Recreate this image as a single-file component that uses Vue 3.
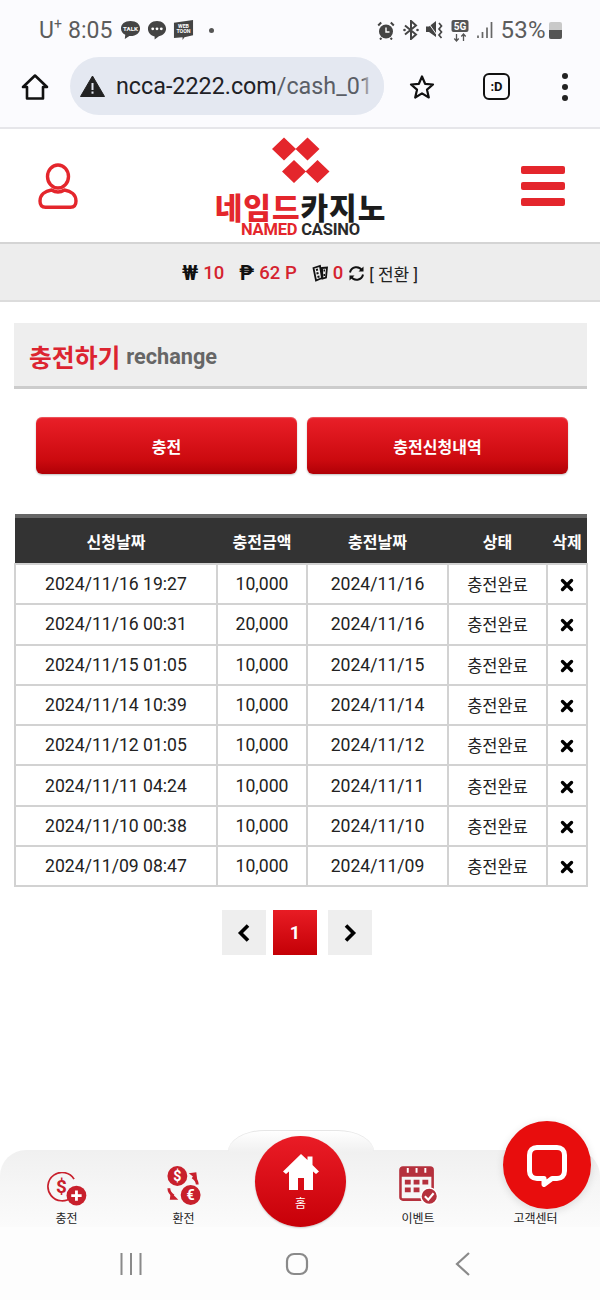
<template>
  <div class="page">
    <!-- 상태바 -->
    <div class="status">
      <div class="status-left">
        <span class="carrier">U<sup>+</sup></span>
        <span class="clock">8:05</span>
        <svg class="ic" width="21" height="20" viewBox="0 0 22 21">
          <path d="M11 1C5 1 1 4.300 1 8.800c0 3 1.800 5.200 4.500 6.600L5 20l4.800-3.300c.4.100.8.100 1.200.100 6 0 10-3.500 10-8S17 1 11 1z" fill="#444" />
          <text x="11" y="11.500" text-anchor="middle" class="tiny">TALK</text>
        </svg>
        <svg class="ic" width="20" height="20" viewBox="0 0 20 21">
          <path d="M10 1C4.500 1 .5 4.500 .5 9.300c0 4.200 3 7.300 7 7.900V20.500l4.500-3.400c4.500-.8 7.500-3.900 7.500-7.800C19.500 4.500 15.500 1 10 1z" fill="#444" />
          <circle cx="5.500" cy="9.300" r="1.500" fill="#fff" /><circle cx="10" cy="9.300" r="1.500" fill="#fff" /><circle cx="14.500" cy="9.300" r="1.500" fill="#fff" />
        </svg>
        <svg class="ic" width="21" height="22" viewBox="0 0 22 23">
          <path d="M1 4l20-3v16l-9 2-2 3v-3l-9 1z" fill="#444" />
          <text x="11" y="9" text-anchor="middle" class="tiny2">WEB</text>
          <text x="11" y="15" text-anchor="middle" class="tiny2">TOON</text>
        </svg>
        <span class="dot"></span>
      </div>
      <div class="status-right">
        <svg width="18" height="19" viewBox="0 0 18 19">
          <circle cx="9" cy="10.500" r="7" fill="#444" />
          <path d="M9 6.500v4.500h3.500" stroke="#fff" stroke-width="1.400" fill="none" />
          <path d="M1.200 4.500l3-3M16.800 4.500l-3-3M4.500 17l-1.500 1.500M13.500 17l1.500 1.500" stroke="#444" stroke-width="2" />
        </svg>
        <svg width="18" height="20" viewBox="0 0 18 20">
          <path d="M3 5.500l11 9-5 4.500V1l5 4.500-11 9" stroke="#444" stroke-width="2" fill="none" />
          <circle cx="2.500" cy="10" r="1.300" fill="#444" /><circle cx="15.500" cy="10" r="1.300" fill="#444" />
        </svg>
        <svg width="18" height="20" viewBox="0 0 18 20">
          <path d="M0 6.500h3l7-5.500v16L3 12H0z" fill="#444" />
          <path d="M1 1l12 17" stroke="#fbfbfe" stroke-width="1" />
          <path d="M13 3l2.500 3-2.500 3 2.500 3-2.500 3 2.500 3" stroke="#444" stroke-width="1.700" fill="none" />
        </svg>
        <svg width="18" height="23" viewBox="0 0 18 23">
          <rect x=".5" y="1" width="17" height="12" rx="2" fill="#555" />
          <text x="9" y="11" text-anchor="middle" class="five">5G</text>
          <path d="M5.500 15v7M3.300 19.500L5.500 22l2.200-2.500M12.500 22v-7M10.300 17.500L12.500 15l2.200 2.500" stroke="#555" stroke-width="1.300" fill="none" />
        </svg>
        <svg width="18" height="18" viewBox="0 0 18 18">
          <path d="M2 14.500v2.500M6.500 11v6M11 6.500V17M15.500 1v16" stroke="#666" stroke-width="1.700" />
        </svg>
        <span class="battery-text">53%</span>
        <span class="battery"><i></i></span>
      </div>
    </div>

    <!-- 브라우저 주소창 -->
    <div class="browser">
      <svg width="28" height="28" viewBox="0 0 28 28" class="b-home">
        <path d="M14 2.500L2 14h4v11.500h16V14h4z" fill="none" stroke="#111" stroke-width="2.600" stroke-linejoin="round" />
      </svg>
      <div class="url">
        <svg width="25" height="22" viewBox="0 0 25 22">
          <path d="M12.500 1L24.500 21.500H.5z" fill="#222" stroke="#222" stroke-linejoin="round" />
          <rect x="11.500" y="8" width="2" height="7" fill="#e4e8f1" />
          <rect x="11.500" y="16.500" width="2" height="2.200" fill="#e4e8f1" />
        </svg>
        <span class="url-text"><b>ncca-2222.com</b>/cash_01</span>
        <span class="url-fade"></span>
      </div>
      <svg width="26" height="26" viewBox="0 0 26 26" class="b-star">
        <path d="M13 2.500l3.100 7.300 7.900.7-6 5.200 1.800 7.800L13 19.400l-6.800 4.100L8 15.700l-6-5.200 7.900-.7z" fill="none" stroke="#111" stroke-width="2.200" stroke-linejoin="round" />
      </svg>
      <div class="tab-btn">:D</div>
      <div class="more"><i></i><i></i><i></i></div>
    </div>

    <!-- 헤더 -->
    <header class="head">
      <svg width="40" height="46" viewBox="0 0 40 46">
        <ellipse cx="20" cy="13.500" rx="10.500" ry="11.500" fill="none" stroke="#e4262c" stroke-width="3.400" />
        <path d="M13.500 27C7 28 2 32 2 38c0 4 2 6.200 5.500 6.200h25C36 44.200 38 42 38 38c0-6-5-10-11.500-11-4 2.500-9 2.500-13 0z" fill="none" stroke="#e4262c" stroke-width="3.400" stroke-linejoin="round" />
      </svg>
      <div class="logo">
        <svg width="58" height="47" viewBox="0 0 58 47">
          <path d="M12 .5L24 12 12 23.500 0 12zM35.500 .5L47.500 12 35.500 23.500 23.500 12zM22 23L34 34.500 22 46 10 34.500zM45.500 23L57.500 34.500 45.500 46 33.500 34.500z" fill="#e4262c" />
        </svg>
        <div class="logo-ko"><span class="red">네임드</span><span>카지노</span></div>
        <div class="logo-en"><span class="red">NAMED</span> CASINO</div>
      </div>
      <div class="burger"><i></i><i></i><i></i></div>
    </header>

    <!-- 보유금 -->
    <div class="balance">
      <b class="sym">₩</b><span class="val">10</span>
      <b class="sym gap">₱</b><span class="val">62 P</span>
      <svg class="dice" width="16" height="18" viewBox="0 0 16 18">
        <path d="M1.500 4L8 2l2 12-6 2.500zM10 4l5-.5-1 10-3.500 1z" fill="none" stroke="#111" stroke-width="1.800" />
        <path d="M4 6l2-.5M4.500 9.500l2-.5M5.500 13l2-.5M11.500 6.500h1.500M11.500 11h1.500" stroke="#111" stroke-width="2" />
      </svg>
      <span class="val chip">0</span>
      <svg class="refresh" width="17" height="17" viewBox="0 0 17 17">
        <path d="M2 7.500A6.500 6.500 0 0 1 14 5.500M15 9.500A6.500 6.500 0 0 1 3 11.500" fill="none" stroke="#111" stroke-width="2" />
        <path d="M15.500 1.500v5h-5zM1.500 15.500v-5h5z" fill="#111" />
      </svg>
      <span class="swap">[ 전환 ]</span>
    </div>

    <main class="content">
      <div class="title"><strong>충전하기</strong><span>rechange</span></div>

      <div class="btns">
        <button>충전</button>
        <button>충전신청내역</button>
      </div>

      <table class="list">
        <colgroup>
          <col style="width:202px" /><col style="width:90px" /><col style="width:141px" /><col style="width:99px" /><col style="width:40px" />
        </colgroup>
        <thead>
          <tr><th>신청날짜</th><th>충전금액</th><th>충전날짜</th><th>상태</th><th>삭제</th></tr>
        </thead>
        <tbody>
          <tr v-for="row in rows" :key="row[0]">
            <td>{{ row[0] }}</td>
            <td>{{ row[1] }}</td>
            <td>{{ row[2] }}</td>
            <td class="state">충전완료</td>
            <td>
              <svg width="14" height="14" viewBox="0 0 14 14"><path d="M2.500 2.500l9 9M11.500 2.500l-9 9" stroke="#000" stroke-width="3.400" stroke-linecap="round" /></svg>
            </td>
          </tr>
        </tbody>
      </table>

      <div class="pager">
        <span class="pg">
          <svg width="14" height="20" viewBox="0 0 14 20"><path d="M11 2.500L3.500 10l7.500 7.500" fill="none" stroke="#000" stroke-width="3.600" /></svg>
        </span>
        <span class="pg on">1</span>
        <span class="pg next">
          <svg width="14" height="20" viewBox="0 0 14 20"><path d="M3 2.500L10.500 10 3 17.500" fill="none" stroke="#000" stroke-width="3.600" /></svg>
        </span>
      </div>
    </main>

    <!-- 하단 메뉴 -->
    <nav class="bottom">
      <div class="hump"></div>
      <div class="item">
        <svg width="40" height="34" viewBox="0 0 42 36">
          <path d="M26 26.500A15 15 0 1 1 28.500 7.500" fill="none" stroke="#c8202c" stroke-width="1.800" />
          <text x="15" y="22" text-anchor="middle" class="money">$</text>
          <circle cx="31" cy="25" r="10.500" fill="#c8202c" />
          <path d="M25.500 25h11M31 19.500v11" stroke="#fff" stroke-width="3" />
        </svg>
        <span>충전</span>
      </div>
      <div class="item">
        <svg width="36" height="41" viewBox="0 0 38 42">
          <circle cx="12" cy="11" r="10.500" fill="#c8202c" />
          <text x="12" y="16" text-anchor="middle" class="coin">$</text>
          <circle cx="26" cy="31" r="10.500" fill="#c8202c" />
          <text x="26" y="36" text-anchor="middle" class="coin">€</text>
          <path d="M33 20c0-4-2-6-5-8" fill="none" stroke="#c8202c" stroke-width="3" />
          <path d="M24 8l8-1 1 8z" fill="#c8202c" />
          <path d="M3 24c0 4 2 6 5 8" fill="none" stroke="#c8202c" stroke-width="3" />
          <path d="M13 36l-9 0 1-8z" fill="#c8202c" />
        </svg>
        <span>환전</span>
      </div>
      <div class="item"></div>
      <div class="item">
        <svg width="39" height="41" viewBox="0 0 40 42">
          <rect x="1.500" y="2.500" width="33" height="33" rx="2.500" fill="#f6f6f6" stroke="#b5313d" stroke-width="2.600" />
          <path d="M1.500 5a2.500 2.500 0 0 1 2.500-2.500h28A2.500 2.500 0 0 1 34.500 5v7h-33z" fill="#b5313d" />
          <path d="M9 3v5M18 3v5M27 3v5" stroke="#fff" stroke-width="2" />
          <path d="M6 15h6v5H6zM15 15h6v5h-6zM24 15h6v5h-6zM6 23h6v5H6zM15 23h6v5h-6z" fill="#b5313d" />
          <circle cx="31" cy="32" r="8.500" fill="#b5313d" stroke="#fff" stroke-width="1.500" />
          <path d="M26.500 32l3.500 3.500 5.500-6.500" fill="none" stroke="#fff" stroke-width="2.200" />
        </svg>
        <span>이벤트</span>
      </div>
      <div class="item last"><span>고객센터</span></div>

      <div class="fab-home">
        <svg width="36" height="37" viewBox="0 0 36 37">
          <path d="M18 1L0 18.500l3 2.500 3-2.500V37h9V25h6v12h9V18.500l3 2.500 3-2.500-6.500-6.500V3.500h-5v3.500z" fill="#fff" />
        </svg>
        <span>홈</span>
      </div>
      <div class="fab-chat">
        <svg width="40" height="42" viewBox="0 0 40 42">
          <path d="M10 2.500h20c4.500 0 7.500 3 7.500 7.500v16c0 4.500-3 7.500-7.500 7.500h-5l-8 6v-6h-7c-4.500 0-7.500-3-7.500-7.500V10c0-4.500 3-7.500 7.500-7.500z" fill="none" stroke="#fff" stroke-width="5" stroke-linejoin="round" />
        </svg>
      </div>
    </nav>

    <!-- 안드로이드 내비 -->
    <div class="android">
      <svg width="24" height="24" viewBox="0 0 24 24"><path d="M2.500 1v22M12 1v22M21.500 1v22" stroke="#8a8a8a" stroke-width="2" /></svg>
      <svg width="24" height="24" viewBox="0 0 24 24"><rect x="2" y="2" width="20" height="20" rx="7" fill="none" stroke="#8a8a8a" stroke-width="2.200" /></svg>
      <svg width="24" height="26" viewBox="0 0 24 26"><path d="M18 2L6 13l12 11" fill="none" stroke="#8a8a8a" stroke-width="2.200" /></svg>
    </div>
  </div>
</template>

<script setup>
const rows = [
  ['2024/11/16 19:27', '10,000', '2024/11/16'],
  ['2024/11/16 00:31', '20,000', '2024/11/16'],
  ['2024/11/15 01:05', '10,000', '2024/11/15'],
  ['2024/11/14 10:39', '10,000', '2024/11/14'],
  ['2024/11/12 01:05', '10,000', '2024/11/12'],
  ['2024/11/11 04:24', '10,000', '2024/11/11'],
  ['2024/11/10 00:38', '10,000', '2024/11/10'],
  ['2024/11/09 08:47', '10,000', '2024/11/09'],
]
</script>

<style>
html,
body {
  margin: 0;
  background: #fff;
}
</style>

<style scoped>
.page {
  width: 600px;
  height: 1300px;
  display: flex;
  flex-direction: column;
  overflow: hidden;
  background: #fff;
  font-family: Roboto, "Noto Sans CJK KR", sans-serif;
  color: #222;
}

.status {
  height: 46px;
  flex: none;
  padding: 14px 38px 0 39px;
  box-sizing: border-box;
  display: flex;
  justify-content: space-between;
  align-items: center;
  background: #fbfbfe;
  color: #5c5c5c;
  font-size: 23px;
}
.status-left {
  display: flex;
  align-items: center;
  gap: 6px;
}
.carrier {
  width: 23px;
  white-space: nowrap;
}
.carrier sup {
  font-size: 14px;
  line-height: 0;
}
.clock {
  margin: 0 2px 0 0;
}
.tiny {
  font: 700 6.500px Roboto, sans-serif;
  fill: #fff;
}
.tiny2 {
  font: 700 5.500px Roboto, sans-serif;
  fill: #fff;
}
.five {
  font: 700 10px Roboto, sans-serif;
  fill: #fff;
}
.dot {
  width: 5px;
  height: 5px;
  border-radius: 50%;
  background: #555;
  margin-left: 9px;
}
.status-right {
  display: flex;
  align-items: center;
  gap: 6.700px;
}
.battery-text {
  font-size: 24px;
  letter-spacing: 0.300px;
}
.battery {
  width: 13px;
  height: 17px;
  margin-left: -3.700px;
  border-radius: 2px;
  background: #c9c9c9;
  display: flex;
  align-items: flex-end;
  overflow: hidden;
}
.battery i {
  display: block;
  width: 100%;
  height: 9px;
  background: #555;
}

.browser {
  height: 81px;
  flex: none;
  display: flex;
  align-items: center;
  background: #fbfbfe;
  border-bottom: 2px solid #e6e6ea;
}
.b-home {
  margin-left: 21px;
}
.url {
  position: relative;
  width: 314px;
  height: 58px;
  margin: -1px 0 0 21px;
  padding-left: 10px;
  box-sizing: border-box;
  border-radius: 29px;
  background: #e4e8f1;
  display: flex;
  align-items: center;
  gap: 11px;
  overflow: hidden;
}
.url-text {
  font-size: 23.300px;
  color: #5a5e66;
  white-space: nowrap;
}
.url-text b {
  font-weight: 400;
  color: #1e2126;
}
.url-fade {
  position: absolute;
  right: 0;
  top: 0;
  width: 22px;
  height: 100%;
  background: linear-gradient(90deg, rgba(228, 232, 241, 0), #e4e8f1 50%);
}
.b-star {
  margin-left: 25px;
}
.tab-btn {
  width: 27px;
  height: 27px;
  margin-left: 48px;
  box-sizing: border-box;
  border: 2.500px solid #111;
  border-radius: 6px;
  display: flex;
  align-items: center;
  justify-content: center;
  font-size: 13px;
  font-weight: 700;
  color: #111;
}
.more {
  margin-left: 52px;
  display: flex;
  flex-direction: column;
  gap: 5px;
}
.more i {
  width: 6px;
  height: 6px;
  border-radius: 50%;
  background: #222;
}

.head {
  height: 115px;
  flex: none;
  padding: 0 35px 0 38px;
  box-sizing: border-box;
  display: flex;
  align-items: center;
  justify-content: space-between;
  border-bottom: 2px solid #d4d4d4;
}
.logo {
  height: 113px;
  margin-left: 2px;
  padding-top: 8px;
  box-sizing: border-box;
  display: flex;
  flex-direction: column;
  align-items: center;
}
.logo-ko {
  margin-top: 7px;
  font-family: "Noto Sans CJK KR", sans-serif;
  font-size: 30px;
  font-weight: 900;
  line-height: 30px;
  letter-spacing: 1px;
  color: #1c1c1c;
  white-space: nowrap;
}
.logo-en {
  margin-top: 1px;
  font-family: Roboto, sans-serif;
  font-size: 16.500px;
  line-height: 16px;
  font-weight: 700;
  letter-spacing: -0.200px;
  color: #2a2a2a;
  white-space: nowrap;
}
.red {
  color: #e4262c;
}
.burger {
  display: flex;
  flex-direction: column;
  gap: 8px;
}
.burger i {
  width: 44px;
  height: 8px;
  border-radius: 2px;
  background: #e4262c;
}

.balance {
  height: 58px;
  flex: none;
  padding-top: 2px;
  box-sizing: border-box;
  display: flex;
  align-items: center;
  justify-content: center;
  background: #ededed;
  border-bottom: 2px solid #dcdcdc;
  font-size: 18.500px;
}
.sym {
  color: #111;
  font-size: 20px;
  margin-right: 5px;
}
.val {
  color: #d5232f;
  font-weight: 500;
}
.gap {
  margin-left: 15px;
}
.dice {
  margin-left: 15px;
}
.chip {
  margin-left: 5px;
}
.refresh {
  margin-left: 5px;
}
.swap {
  margin-left: 4px;
  font-size: 17px;
  color: #222;
}

.content {
  padding: 21px 13px 0 14px;
  flex: none;
}
.title {
  height: 66px;
  padding: 3px 0 0 15px;
  box-sizing: border-box;
  display: flex;
  align-items: center;
  gap: 6px;
  background: #eee;
  border-bottom: 3px solid #ccc;
}
.title strong {
  color: #dc2430;
  font-size: 24.800px;
  font-weight: 700;
}
.title span {
  color: #666;
  font-size: 21.700px;
  font-weight: 700;
}
.btns {
  margin: 28px 19px 0 22px;
  display: flex;
  gap: 10px;
}
.btns button {
  flex: 1;
  height: 57px;
  border: 0;
  border-radius: 6px;
  background: linear-gradient(#e8202a 0, #e51c24 12%, #cc0a0f 75%, #b00006 100%);
  box-shadow: inset 0 1px 1px rgba(255, 255, 255, 0.25), 0 1px 2px rgba(0, 0, 0, 0.25);
  color: #fff;
  font-family: inherit;
  font-size: 16px;
  font-weight: 700;
}

.list {
  margin-top: 40px;
  width: 572px;
  table-layout: fixed;
  border-collapse: collapse;
}
.list th {
  height: 45px;
  padding: 0;
  background: #333;
  border-top: 4px solid #666;
  color: #fff;
  font-size: 16px;
  font-weight: 700;
}
.list td {
  height: 38.300px;
  padding: 0;
  border: 2px solid #d2d2d2;
  text-align: center;
  font-size: 17.600px;
  color: #222;
}
.list td.state {
  font-size: 16.500px;
}
.list td svg {
  display: block;
  margin: 2px auto 0;
}
.pager {
  margin-top: 23px;
  padding-left: 208px;
  display: flex;
  gap: 7px;
}
.pg {
  width: 44px;
  height: 45px;
  background: #eee;
  display: flex;
  align-items: center;
  justify-content: center;
}
.pg.on {
  background: linear-gradient(#e81c24, #c40006);
  color: #fff;
  font-size: 18px;
  font-weight: 700;
}
.pg.next {
  margin-left: 4px;
}

.bottom {
  position: relative;
  margin-top: auto;
  height: 77px;
  flex: none;
  padding-left: 8px;
  display: grid;
  grid-template-columns: 117px 117px 117px 118px 1fr;
  background: linear-gradient(#f0f0f0, #f6f6f6 50%, #fbfbfb);
  border-radius: 26px 26px 0 0;
}
.hump {
  position: absolute;
  left: 228px;
  top: -20px;
  width: 146px;
  height: 44px;
  box-sizing: border-box;
  border-radius: 73px / 44px;
  border-top: 1px solid #e6e6e6;
  background: linear-gradient(#fff, #f0f0f0 50%);
  clip-path: inset(0 0 22px 0);
}
.item {
  position: relative;
  height: 77px;
  padding-bottom: 1px;
  box-sizing: border-box;
  display: flex;
  flex-direction: column;
  align-items: center;
  justify-content: flex-end;
  gap: 3px;
  font-size: 12px;
  color: #222;
}
.item.last {
  padding-right: 6px;
}
.fab-home {
  position: absolute;
  left: 255px;
  top: -14px;
  width: 91px;
  height: 91px;
  border-radius: 50%;
  background: linear-gradient(#ea1c26, #c70008);
  box-shadow: 0 1px 2px rgba(0, 0, 0, 0.2);
  display: flex;
  flex-direction: column;
  align-items: center;
  padding-top: 17px;
  box-sizing: border-box;
  color: #fff;
  font-size: 12px;
}
.fab-home span {
  margin-top: 4px;
}
.fab-chat {
  position: absolute;
  left: 503px;
  top: -29px;
  width: 88px;
  height: 88px;
  border-radius: 50%;
  background: #e80d0d;
  display: flex;
  align-items: center;
  justify-content: center;
  box-shadow: 0 2px 8px rgba(0, 0, 0, 0.12);
}
.fab-chat svg {
  margin-top: 2px;
}
.money {
  font: 700 20px Roboto, sans-serif;
  fill: #c8202c;
}
.coin {
  font: 700 15px Roboto, sans-serif;
  fill: #fff;
}

.android {
  height: 73px;
  flex: none;
  padding: 0 125px 0 119px;
  box-sizing: border-box;
  display: flex;
  align-items: center;
  justify-content: space-between;
  background: #fdfdfd;
}
</style>
